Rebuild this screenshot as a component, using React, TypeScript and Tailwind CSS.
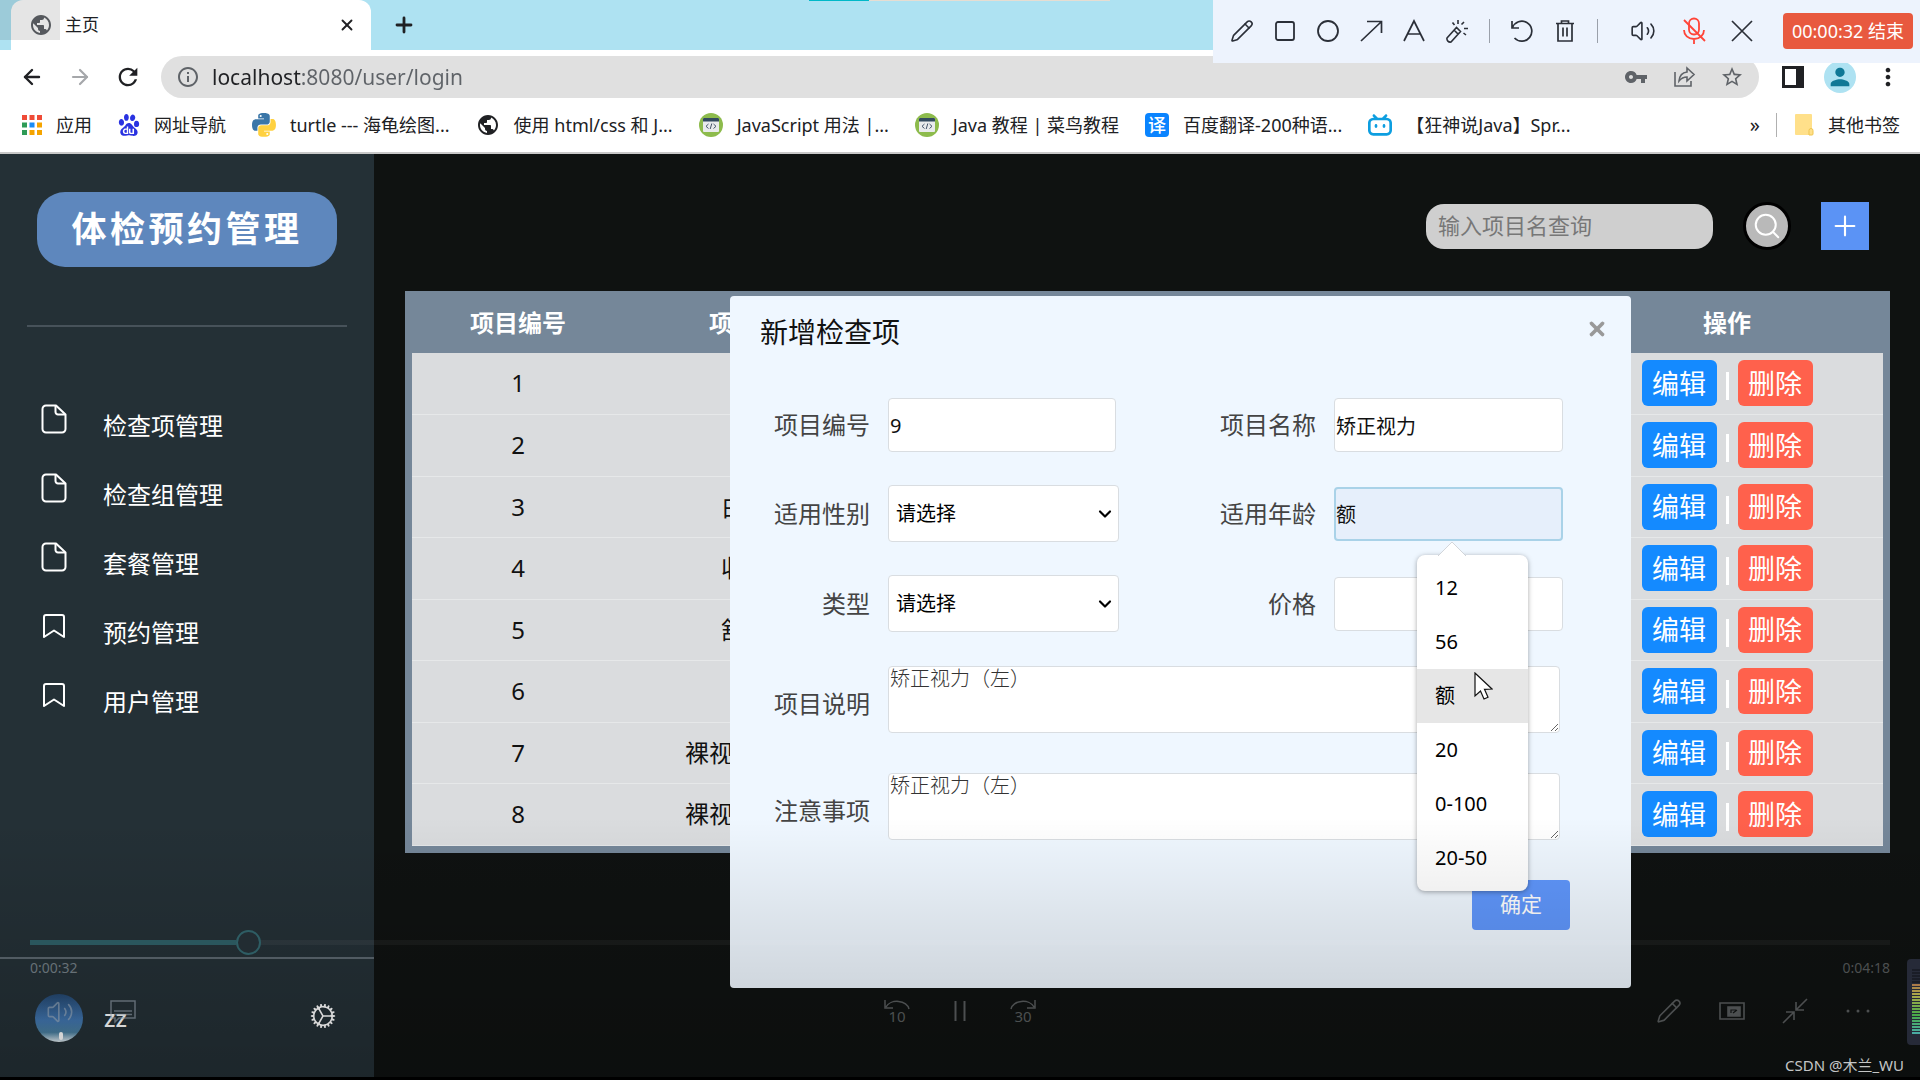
import { useState } from 'react'
import type { ReactNode } from 'react'
import { ArrowLeft, ArrowRight, Bookmark, ChevronDown, Circle, Pencil, Plus, Search, Square, Volume2, X } from 'lucide-react'
import { IoIosCog } from 'react-icons/io'
import { MdMoreVert, MdOutlineInfo, MdPerson, MdPublic, MdRefresh, MdStarBorder, MdVpnKey } from 'react-icons/md'
import { SiBaidu, SiBilibili } from 'react-icons/si'

interface Item {
  id: number
  name: string
}

const items: Item[] = [
  { id: 1, name: '' },
  { id: 2, name: '' },
  { id: 3, name: '白细胞' },
  { id: 4, name: '收缩压' },
  { id: 5, name: '舒张压' },
  { id: 6, name: '' },
  { id: 7, name: '裸视力（左）' },
  { id: 8, name: '裸视力（右）' },
]

const menus = [
  { label: '检查项管理', icon: 'file' },
  { label: '检查组管理', icon: 'file' },
  { label: '套餐管理', icon: 'file' },
  { label: '预约管理', icon: 'bookmark' },
  { label: '用户管理', icon: 'bookmark' },
]

const ages = ['12', '56', '额', '20', '0-100', '20-50']

const APP_COLORS = ['#ef4b37', '#ef4b37', '#ef4b37', '#2e9b57', '#1a8cf5', '#f5a400', '#2e9b57', '#f5a400', '#f5a400']

function AppsIcon() {
  return (
    <svg viewBox="0 0 20 20" className="h-5 w-5">
      {APP_COLORS.map((c, i) => (
        <rect key={i} x={(i % 3) * 7.5} y={Math.floor(i / 3) * 7.5} width="5" height="5" fill={c} />
      ))}
    </svg>
  )
}

function PythonIcon() {
  return (
    <svg viewBox="0 0 256 255" className="h-6 w-6">
      <path
        fill="#3a76a8"
        d="M126.916.072c-64.832 0-60.784 28.115-60.784 28.115l.072 29.128h61.868v8.745H41.631S.145 61.355.145 126.77c0 65.417 36.21 63.097 36.21 63.097h21.61v-30.356s-1.165-36.21 35.632-36.21h61.362s34.475.557 34.475-33.319V33.97S194.67.072 126.916.072zM92.802 19.66a11.12 11.12 0 0 1 11.13 11.13 11.12 11.12 0 0 1-11.13 11.13 11.12 11.12 0 0 1-11.13-11.13 11.12 11.12 0 0 1 11.13-11.13z"
      />
      <path
        fill="#ffd140"
        d="M128.757 254.126c64.832 0 60.784-28.115 60.784-28.115l-.072-29.127H127.6v-8.745h86.441s41.486 4.705 41.486-60.712c0-65.416-36.21-63.096-36.21-63.096h-21.61v30.355s1.165 36.21-35.632 36.21h-61.362s-34.475-.557-34.475 33.32v56.013s-5.235 33.897 62.518 33.897zm34.114-19.586a11.12 11.12 0 0 1-11.13-11.13 11.12 11.12 0 0 1 11.13-11.131 11.12 11.12 0 0 1 11.13 11.13 11.12 11.12 0 0 1-11.13 11.13z"
      />
    </svg>
  )
}

function RunoobIcon() {
  return (
    <svg viewBox="0 0 24 24" className="h-6 w-6">
      <circle cx="12" cy="12" r="12" fill="#8dbb4c" />
      <rect x="4" y="5" width="16" height="14" rx="1" fill="#e9ebec" />
      <path d="M4 8.500V6a1 1 0 0 1 1-1h14a1 1 0 0 1 1 1v2.500z" fill="#324a5e" />
      <path d="M9.500 11 7 13.300l2.500 2.200M14.500 11l2.500 2.300-2.500 2.200M12.800 10.500l-1.600 5.500" fill="none" stroke="#44546a" strokeWidth="1" />
    </svg>
  )
}

function FolderIcon() {
  return (
    <svg viewBox="0 0 20 24" className="h-6 w-5">
      <rect x="1" y="1" width="17" height="21" rx="1" fill="#ffe08a" />
      <path d="M15 22v-4.500a2 2 0 0 1 4 0V21a1 1 0 0 1-1 1z" fill="#ffe08a" stroke="#efc54e" />
    </svg>
  )
}

function FileIcon() {
  return (
    <svg viewBox="0 0 26 30" className="h-[30px] w-[26px]" fill="none" stroke="currentColor" strokeWidth="2" strokeLinejoin="round">
      <path d="M5 1.500h10l9.500 9V25a3.500 3.500 0 0 1-3.500 3.500H5A3.500 3.500 0 0 1 1.500 25V5A3.500 3.500 0 0 1 5 1.500z" />
      <path d="M14.500 2v6a2.500 2.500 0 0 0 2.500 2.500h7" />
    </svg>
  )
}

const bookmarks: { label: string; icon: ReactNode }[] = [
  { label: '应用', icon: <AppsIcon /> },
  { label: '网址导航', icon: <SiBaidu className="h-[22px] w-[22px] text-[#2932e1]" /> },
  { label: 'turtle --- 海龟绘图...', icon: <PythonIcon /> },
  { label: '使用 html/css 和 J...', icon: <MdPublic className="h-6 w-6 text-[#202124]" /> },
  { label: 'JavaScript 用法 |...', icon: <RunoobIcon /> },
  { label: 'Java 教程 | 菜鸟教程', icon: <RunoobIcon /> },
  {
    label: '百度翻译-200种语...',
    icon: <span className="flex h-6 w-6 items-center justify-center rounded bg-[#0a84ff] text-lg leading-none font-medium text-white">译</span>,
  },
  { label: '【狂神说Java】Spr...', icon: <SiBilibili className="h-6 w-6 text-[#0d9ee0]" /> },
]

function BrowserHeader() {
  return (
    <header className="bg-white text-[#202124]">
      <div className="flex h-[50px] items-stretch bg-[#aee2f2]">
        <div className="ml-[11px] flex w-[360px] items-center rounded-t-xl bg-white pr-3 pl-[18px]">
          <MdPublic className="h-6 w-6 text-[#5f6368]" />
          <span className="ml-3 flex-1 text-[17px]">主页</span>
          <button aria-label="关闭标签页" className="flex h-6 w-6 items-center justify-center">
            <X className="h-[18px] w-[18px]" strokeWidth={2.5} />
          </button>
        </div>
        <button aria-label="新标签页" className="ml-[21px] flex items-center">
          <Plus className="h-6 w-6" strokeWidth={2.8} />
        </button>
      </div>
      <div className="flex h-12 items-center pt-[6px] pr-[18px] pl-5">
        <button aria-label="后退"><ArrowLeft className="h-6 w-6" strokeWidth={2.4} /></button>
        <button aria-label="前进" className="ml-6 text-[#a5a7aa]"><ArrowRight className="h-6 w-6" strokeWidth={2.2} /></button>
        <button aria-label="刷新" className="ml-[22px]"><MdRefresh className="h-7 w-7" /></button>
        <div className="ml-[19px] flex h-[42px] flex-1 items-center rounded-full bg-[#e0e0e0] px-[15px] text-[#5f6368]">
          <MdOutlineInfo className="h-6 w-6 shrink-0" />
          {/* host part is darker than the path */}
          <input
            aria-label="地址"
            defaultValue="localhost:8080/user/login"
            className="ml-3 h-[42px] flex-1 bg-[linear-gradient(to_right,#202124_90px,#5f6368_90px)] bg-clip-text text-[21px] text-transparent outline-none"
          />
          <div className="flex items-center gap-6">
            <MdVpnKey className="h-6 w-6" />
            <svg viewBox="0 0 24 24" className="h-6 w-6" fill="none" stroke="currentColor" strokeWidth="1.600">
              <path d="M3 7v14h16v-5M15 3l7 6.500-7 6.500v-4c-4 0-6 1.500-8 4 .5-5 3-8.500 8-9z" />
            </svg>
            <MdStarBorder className="h-6 w-6" />
          </div>
        </div>
        <svg viewBox="0 0 22 22" className="ml-[23px] h-[22px] w-[22px]">
          <path d="M0 0h22v22H0zM3 3v16h11V3z" fill="#202124" fillRule="evenodd" />
        </svg>
        <span className="ml-5 flex h-8 w-8 items-center justify-center rounded-full bg-[#aee2f2]">
          <MdPerson className="h-7 w-7 text-[#0f7896]" />
        </span>
        <MdMoreVert className="ml-[18px] h-7 w-7" />
      </div>
      <nav className="flex h-14 items-center border-b-2 border-[#c8c8c8] pr-5 pl-[22px] text-lg whitespace-nowrap">
        <div className="flex items-center gap-[26px]">
          {bookmarks.map((b) => (
            <a key={b.label} href="#" className="flex items-center gap-[14px]">
              {b.icon}
              <span>{b.label}</span>
            </a>
          ))}
        </div>
        <span className="ml-auto text-xl">»</span>
        <span className="mr-[17px] ml-4 h-6 w-px bg-[#b0b0b0]" />
        <a href="#" className="flex items-center gap-[14px]">
          <FolderIcon />
          <span>其他书签</span>
        </a>
      </nav>
    </header>
  )
}

function RecorderBar() {
  return (
    <div className="absolute top-0 right-0 flex h-[63px] w-[707px] items-center bg-[#edf3fd] pr-[7px] pb-px pl-[17px] text-[#2b2f38]">
      <div className="flex items-center gap-[19px]">
        <Pencil className="h-6 w-6" strokeWidth={1.6} />
        <Square className="h-6 w-6" strokeWidth={1.8} />
        <Circle className="h-6 w-6" strokeWidth={1.8} />
        <svg viewBox="0 0 24 24" className="h-6 w-6" fill="none" stroke="currentColor" strokeWidth="1.700">
          <path d="M2 22 22 3M8 2.500h14.500V14" />
        </svg>
        <svg viewBox="0 0 24 24" className="h-6 w-6" fill="none" stroke="currentColor" strokeWidth="1.700">
          <path d="M2 22 12 2l10 20M6 15h12" />
        </svg>
        <svg viewBox="0 0 24 24" className="h-6 w-6" fill="none" stroke="currentColor" strokeWidth="1.600">
          <path d="m2 19 9.500-10.500 4 4L6 23c-2.500.5-4.500-1.500-4-4zM9 11l4 4M13 1v4M7.500 3.500l2 2.500M19 3l-2.500 2.500M19 9.500h4M18.500 14l2.500 2" />
        </svg>
      </div>
      <span className="ml-5 h-6 w-px bg-[#9aa0aa]" />
      <div className="ml-5 flex items-center gap-[19px]">
        <svg viewBox="0 0 24 24" className="h-6 w-6" fill="none" stroke="currentColor" strokeWidth="1.700">
          <path d="M2 2v7h7M2.500 8.500A10 10 0 1 1 4.500 19" />
        </svg>
        <svg viewBox="0 0 24 24" className="h-6 w-6" fill="none" stroke="currentColor" strokeWidth="1.700">
          <path d="M3 4.500h18M8.500 4V2h7v2M5 4.500V22h14V4.500M10 8.500v9M14 8.500v9" />
        </svg>
      </div>
      <span className="ml-5 h-6 w-px bg-[#9aa0aa]" />
      <Volume2 className="ml-8 h-[26px] w-[26px]" strokeWidth={1.5} />
      <svg viewBox="0 0 24 28" className="ml-[26px] h-7 w-6 text-[#ff4438]" fill="none" stroke="currentColor" strokeWidth="1.800">
        <rect x="7" y="1.500" width="10" height="16" rx="5" />
        <path d="M2 13c0 5 4 9 10 9s10-4 10-9M12 22v5M2 3l21 21" />
      </svg>
      <button aria-label="关闭" className="ml-6">
        <svg viewBox="0 0 24 24" className="h-6 w-6" fill="none" stroke="currentColor" strokeWidth="1.700">
          <path d="M2 2l20 20M22 2 2 22" />
        </svg>
      </button>
      <button className="ml-auto h-9 w-[130px] rounded bg-[#e8593f] text-lg text-white">00:00:32 结束</button>
    </div>
  )
}

function Sidebar() {
  return (
    <aside className="flex w-[374px] shrink-0 flex-col bg-[#243036] text-white">
      <h1 className="mx-[37px] mt-[38px] flex h-[75px] items-center justify-center rounded-[28px] bg-[#5e87bd] text-[35px] font-bold tracking-widest">
        体检预约管理
      </h1>
      <hr className="mx-[27px] mt-[58px] border-t-2 border-[#47525a]" />
      <nav className="mt-[64px] flex flex-col pl-[41px]">
        {menus.map((m) => (
          <a key={m.label} href="#" className="flex h-[69px] items-center">
            <span className="flex w-[62px] pb-[14px]">
              {m.icon === 'file' ? (
                <FileIcon />
              ) : (
                <svg viewBox="0 0 26 26" className="h-[26px] w-[26px]" fill="none" stroke="currentColor" strokeWidth="2" strokeLinejoin="round">
                  <path d="M5 2h16a2 2 0 0 1 2 2v20l-10-6.500L3 24V4a2 2 0 0 1 2-2z" />
                </svg>
              )}
            </span>
            <span className="text-2xl">{m.label}</span>
          </a>
        ))}
      </nav>
      <div className="mt-auto flex h-[120px] items-center border-t-2 border-[#5b666e] pl-[35px]">
        <svg viewBox="0 0 48 48" className="h-12 w-12">
          <defs>
            <linearGradient id="sky" x1="0" y1="0" x2="0" y2="1">
              <stop offset="0" stopColor="#24476f" />
              <stop offset="0.550" stopColor="#4176b0" />
              <stop offset="0.800" stopColor="#4a7fa0" />
              <stop offset="1" stopColor="#e4eef2" />
            </linearGradient>
          </defs>
          <circle cx="24" cy="24" r="24" fill="url(#sky)" />
          <rect x="24" y="38" width="4" height="8" rx="2" fill="#fff" />
        </svg>
        <span className="ml-[21px] text-2xl font-medium">zz</span>
        <button aria-label="设置" className="mr-[36px] mb-1 ml-auto">
          <IoIosCog className="h-[30px] w-[30px]" />
        </button>
      </div>
    </aside>
  )
}

function ItemTable() {
  return (
    <div className="border-[7px] border-[#758799]">
      <table className="w-full table-fixed bg-[#dadcde] text-2xl text-[#111]">
        <colgroup>
          <col className="w-[212px]" />
          <col className="w-[266px]" />
          <col />
          <col className="w-[312px]" />
        </colgroup>
        <thead className="bg-[#758799] text-white">
          <tr className="h-[55px]">
            <th className="pb-[6px]">项目编号</th>
            <th className="pb-[6px]">项目名称</th>
            <th />
            <th className="pb-[6px]">操作</th>
          </tr>
        </thead>
        <tbody className="text-center">
          {items.map((item) => (
            <tr key={item.id} className="border-b border-[#e6e8e9] odd:h-[61px] even:h-[62px]">
              <td>{item.id}</td>
              <td>{item.name}</td>
              <td />
              <td>
                <div className="flex items-center justify-center gap-[9px]">
                  <button className="h-[46px] w-[75px] rounded-md bg-[#148aff] text-[27px] leading-none text-white">编辑</button>
                  <span className="mt-[6px] h-7 w-[3px] bg-white" />
                  <button className="h-[46px] w-[75px] rounded-md bg-[#ff614c] text-[27px] leading-none text-white">删除</button>
                </div>
              </td>
            </tr>
          ))}
        </tbody>
      </table>
    </div>
  )
}

function AgePopover({ onPick }: { onPick: (v: string) => void }) {
  return (
    <div className="absolute top-[68px] left-[83px] z-10 w-[111px] rounded-lg bg-white py-[6px] shadow-[0_1px_5px_rgba(0,0,0,0.35)]">
      <svg viewBox="0 0 28 14" className="absolute -top-[13px] left-[21px] h-[14px] w-7">
        <path d="M0 14 14 0l14 14z" fill="#fff" stroke="#c9cdd2" strokeWidth="0.800" />
        <path d="M1 14h26" stroke="#fff" strokeWidth="2" />
      </svg>
      <ul>
        {ages.map((a) => (
          <li key={a}>
            <button type="button" onClick={() => onPick(a)} className={`h-[54px] w-full pl-[18px] text-left text-xl text-black ${a === '额' ? 'bg-[#e6e6e6]' : ''}`}>
              {a}
            </button>
          </li>
        ))}
      </ul>
      <svg viewBox="0 0 19 29" className="absolute top-[117px] left-[57px] h-[29px] w-[19px]">
        <path d="M1 1v23l5.500-5 3.500 8 4-1.700-3.500-8 7.500-.3z" fill="#fff" stroke="#111" strokeWidth="1.200" />
      </svg>
    </div>
  )
}

const labelClass = 'text-right text-2xl text-[#444]'
const inputClass = 'h-[54px] w-full rounded border border-[#d9dde1] bg-white px-[1px] text-xl text-[#111] outline-none'
const areaClass = 'block h-[67px] w-full rounded border border-[#d9dde1] bg-white px-[1px] text-xl leading-6 font-light text-[#333] outline-none'

function SelectBox({ id }: { id: string }) {
  return (
    <div className="relative">
      <select id={id} className="h-[57px] w-full appearance-none rounded border border-[#d9dde1] bg-white pl-[7px] text-xl text-black">
        <option>请选择</option>
      </select>
      <ChevronDown className="pointer-events-none absolute top-[19px] right-1 h-5 w-5 text-black" strokeWidth={2.6} />
    </div>
  )
}

function AddDialog() {
  const [age, setAge] = useState('额')

  return (
    <div role="dialog" aria-label="新增检查项" className="absolute top-[142px] left-[356px] w-[901px] rounded-sm bg-[#eff7ff] pb-[58px]">
      <div className="flex h-[102px] items-start justify-between pt-4 pr-[23px] pl-[30px]">
        <h2 className="text-[28px] leading-10 text-[#111]">新增检查项</h2>
        <button aria-label="关闭" className="mt-[6px]">
          <X className="h-[22px] w-[22px] text-[#999]" strokeWidth={4} />
        </button>
      </div>
      <form>
        <div className="grid grid-cols-[140px_231px_179px_229px] items-center gap-x-[18px] gap-y-[33px]">
          <label htmlFor="no" className={labelClass}>项目编号</label>
          <div className="pr-[3px]"><input id="no" defaultValue="9" className={inputClass} /></div>
          <label htmlFor="name" className={labelClass}>项目名称</label>
          <input id="name" defaultValue="矫正视力" className={inputClass} />

          <label htmlFor="sex" className={labelClass}>适用性别</label>
          <SelectBox id="sex" />
          <label htmlFor="age" className={labelClass}>适用年龄</label>
          <div className="relative">
            <input
              id="age"
              value={age}
              onChange={(e) => setAge(e.target.value)}
              className="h-[54px] w-full rounded border-2 border-[#a9d2e8] bg-[#e6effb] text-xl text-[#111] outline-none"
            />
            <AgePopover onPick={setAge} />
          </div>

          <label htmlFor="type" className={labelClass}>类型</label>
          <SelectBox id="type" />
          <label htmlFor="price" className={labelClass}>价格</label>
          <input id="price" className={inputClass} />
        </div>
        <div className="mt-[34px] grid grid-cols-[140px_672px] items-center gap-x-[18px] gap-y-10">
          <label htmlFor="desc" className={`${labelClass} pt-2`}>项目说明</label>
          <textarea id="desc" defaultValue="矫正视力（左）" className={areaClass} />
          <label htmlFor="note" className={`${labelClass} pt-2`}>注意事项</label>
          <textarea id="note" defaultValue="矫正视力（左）" className={areaClass} />
        </div>
        <div className="mt-10 flex justify-end pr-[61px]">
          <button type="button" className="h-[50px] w-[98px] rounded bg-[#5f96fb] text-[21px] text-white">确定</button>
        </div>
      </form>
    </div>
  )
}

function SkipIcon({ label, flip }: { label: string; flip?: boolean }) {
  return (
    <svg viewBox="0 0 28 34" className="h-[34px] w-7" fill="none" stroke="currentColor" strokeWidth="1.500">
      {flip ? <path d="M2 11a12 9 0 0 1 23-2M26 2v8h-8" /> : <path d="M26 11A12 9 0 0 0 3 9M2 2v8h8" />}
      <text x="14" y="24" textAnchor="middle" fontSize="15" fill="currentColor" stroke="none">{label}</text>
    </svg>
  )
}

function Player() {
  return (
    <div className="pointer-events-none absolute right-0 bottom-[3px] left-0 z-20 flex h-[260px] flex-col justify-end bg-linear-to-b from-transparent to-black/20 px-[30px] text-[#4c4f50]">
      <input
        type="range"
        aria-label="播放进度"
        min={0}
        max={258}
        defaultValue={29}
        className="pointer-events-auto h-6 w-full appearance-none bg-transparent [&::-webkit-slider-runnable-track]:h-[5px] [&::-webkit-slider-runnable-track]:bg-[linear-gradient(to_right,#2a565d_206px,rgba(255,255,255,0.04)_206px)] [&::-webkit-slider-thumb]:-mt-[10px] [&::-webkit-slider-thumb]:h-[25px] [&::-webkit-slider-thumb]:w-[25px] [&::-webkit-slider-thumb]:appearance-none [&::-webkit-slider-thumb]:rounded-full [&::-webkit-slider-thumb]:border-2 [&::-webkit-slider-thumb]:border-[#2e5d64] [&::-webkit-slider-thumb]:bg-[#222c32]"
      />
      <div className="mt-[2px] mb-[2px] flex h-6 items-center justify-between text-sm">
        <span className="text-[#667076]">0:00:32</span>
        <span>0:04:18</span>
      </div>
      <div className="grid h-[95px] grid-cols-[1fr_154px_1fr] items-start pt-[16px]">
        <div className="flex items-center gap-9 pl-4 text-[#8c98a4]/60">
          <Volume2 className="h-7 w-7" strokeWidth={1.4} />
          <svg viewBox="0 0 26 24" className="h-6 w-[26px]" fill="none" stroke="currentColor" strokeWidth="1.500">
            <path d="M1 1h24v17H9l-4 4v-4H1zM4 11h18M4 14.500h18" />
          </svg>
        </div>
        <div className="flex items-start justify-between">
          <SkipIcon label="10" />
          <svg viewBox="0 0 12 22" className="mt-[2px] h-[22px] w-3" fill="none" stroke="currentColor" strokeWidth="2">
            <path d="M1.500 1v20M10.500 1v20" />
          </svg>
          <SkipIcon label="30" flip />
        </div>
        <div className="flex items-center justify-end gap-[37px] pr-[19px]">
          <Pencil className="h-[26px] w-[26px]" strokeWidth={1.5} />
          <svg viewBox="0 0 26 18" className="h-[18px] w-[26px]" fill="none" stroke="currentColor" strokeWidth="1.600">
            <path d="M1 1h24v16H1z" />
            <path d="M9 5h12v9H9z" fill="currentColor" />
            <path d="M12 11V8h5M14 11l4-3" stroke="#101212" strokeWidth="1.200" />
          </svg>
          <svg viewBox="0 0 26 26" className="h-[26px] w-[26px]" fill="none" stroke="currentColor" strokeWidth="1.600">
            <path d="M25 1 14 12M14 4v8h8M1 25l11-11M4 14h8v8" />
          </svg>
          <svg viewBox="0 0 26 4" className="h-1 w-[26px]" fill="currentColor">
            <circle cx="3" cy="2" r="1.500" />
            <circle cx="13" cy="2" r="1.500" />
            <circle cx="23" cy="2" r="1.500" />
          </svg>
        </div>
      </div>
    </div>
  )
}

// volume level, green at the bottom to orange at the top
function LevelMeter() {
  const bars = Array.from({ length: 22 }, (_, i) => i)
  return (
    <svg viewBox="0 0 13 86" className="absolute right-0 bottom-[35px] z-20 h-[86px] w-[13px]">
      <rect width="20" height="86" rx="4" fill="#262a38" />
      {bars.map((i) => (
        <rect key={i} x="5" y={10 + i * 3} width="8" height="2" fill={i < 5 ? '#1a1d27' : `hsl(${30 + (i - 5) * 9} 40% 48%)`} />
      ))}
    </svg>
  )
}

export default function App() {
  return (
    <div className="relative flex min-h-screen flex-col overflow-hidden bg-black pb-[3px] font-['Noto_Sans','Noto_Sans_CJK_SC',sans-serif]">
      <BrowserHeader />
      <div className="absolute top-0 left-0 h-10 w-[60px] bg-black/10" />
      <div className="absolute top-0 left-[809px] flex h-px w-[301px] bg-[#e6ddd2]">
        <span className="w-[60px] bg-[#00b8c8]" />
      </div>
      <RecorderBar />
      <div className="flex flex-1">
        <Sidebar />
        <main className="relative flex-1 bg-[#0f1211] pr-[30px] pl-[31px]">
          <div className="flex h-[137px] items-start justify-end pt-12 pr-[21px]">
            <input
              aria-label="项目名"
              placeholder="输入项目名查询"
              className="mt-[2px] h-[45px] w-[287px] rounded-[18px] bg-[#cfcfcf] px-3 pb-1 text-[22px] placeholder:text-[#777]"
            />
            <button aria-label="查询" className="ml-[30px] flex h-12 w-12 items-center justify-center rounded-full border-[3px] border-black bg-[#b9b9b9] text-white">
              <Search className="h-[30px] w-[30px]" strokeWidth={1.6} />
            </button>
            <button aria-label="新增" className="ml-[30px] flex h-12 w-12 items-center justify-center bg-[#5b93f5] text-white">
              <Plus className="h-8 w-8" strokeWidth={1.6} />
            </button>
          </div>
          <ItemTable />
          <AddDialog />
        </main>
      </div>
      <Player />
      <LevelMeter />
      <p className="absolute right-4 bottom-1 z-20 text-[15px] text-[#c4c6c6]">CSDN @木兰_WU</p>
    </div>
  )
}
